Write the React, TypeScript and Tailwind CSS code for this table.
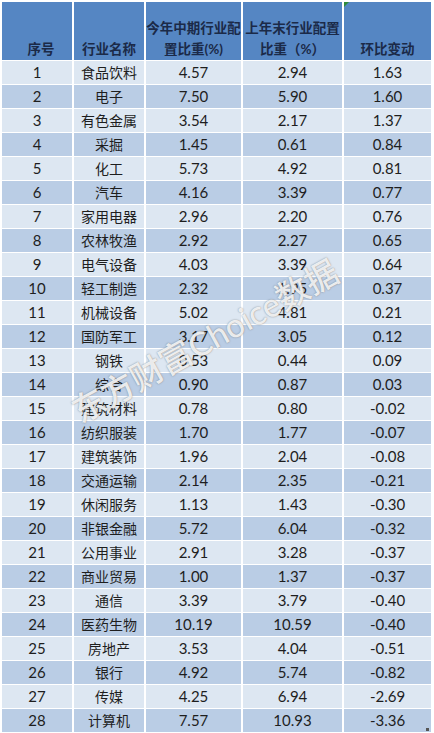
const rows: [number, string, string, string, string][] = [
  [1, '食品饮料', '4.57', '2.94', '1.63'],
  [2, '电子', '7.50', '5.90', '1.60'],
  [3, '有色金属', '3.54', '2.17', '1.37'],
  [4, '采掘', '1.45', '0.61', '0.84'],
  [5, '化工', '5.73', '4.92', '0.81'],
  [6, '汽车', '4.16', '3.39', '0.77'],
  [7, '家用电器', '2.96', '2.20', '0.76'],
  [8, '农林牧渔', '2.92', '2.27', '0.65'],
  [9, '电气设备', '4.03', '3.39', '0.64'],
  [10, '轻工制造', '2.32', '1.95', '0.37'],
  [11, '机械设备', '5.02', '4.81', '0.21'],
  [12, '国防军工', '3.17', '3.05', '0.12'],
  [13, '钢铁', '0.53', '0.44', '0.09'],
  [14, '综合', '0.90', '0.87', '0.03'],
  [15, '建筑材料', '0.78', '0.80', '-0.02'],
  [16, '纺织服装', '1.70', '1.77', '-0.07'],
  [17, '建筑装饰', '1.96', '2.04', '-0.08'],
  [18, '交通运输', '2.14', '2.35', '-0.21'],
  [19, '休闲服务', '1.13', '1.43', '-0.30'],
  [20, '非银金融', '5.72', '6.04', '-0.32'],
  [21, '公用事业', '2.91', '3.28', '-0.37'],
  [22, '商业贸易', '1.00', '1.37', '-0.37'],
  [23, '通信', '3.39', '3.79', '-0.40'],
  [24, '医药生物', '10.19', '10.59', '-0.40'],
  [25, '房地产', '3.53', '4.04', '-0.51'],
  [26, '银行', '4.92', '5.74', '-0.82'],
  [27, '传媒', '4.25', '6.94', '-2.69'],
  [28, '计算机', '7.57', '10.93', '-3.36'],
];

const cols = 'grid grid-cols-[70px_70px_95px_99px_87px] gap-x-[2px]';

export default function App() {
  return (
    <div className="relative w-[434px] h-[733px] overflow-hidden bg-white font-['Lato','Noto_Sans_CJK_SC',sans-serif]">
      <div className="flex w-[430px] flex-col gap-y-[1px] pt-[2px] pl-[2px]">
        {/* 表头 */}
        <div className={`${cols} h-[58px] text-[13.5px] font-bold leading-[21px] text-[#1b2a48]`}>
          <div className="flex items-end justify-center bg-[#5586c3] pl-[8px]">序号</div>
          <div className="flex items-end justify-center bg-[#5586c3]">行业名称</div>
          <div className="flex items-end justify-center bg-[#5586c3] text-center">
            今年中期行业配
            <br />
            置比重(%)
          </div>
          <div className="flex items-end justify-center bg-[#5586c3] text-center">
            上年末行业配置
            <br />
            比重（%）
          </div>
          <div className="relative flex items-end justify-center bg-[#5586c3]">
            <span className="absolute left-0 top-0 h-0 w-0 border-r-[5px] border-t-[5px] border-r-transparent border-t-[#2f8a3a]" />
            环比变动
          </div>
        </div>

        {rows.map(([n, name, a, b, c]) => (
          <div
            key={n}
            className={`${cols} h-[23px] text-[15px] leading-[23px] text-[#1e1e1e] ${
              n % 2 === 1 ? '[&>div]:bg-[#dde7f2]' : '[&>div]:bg-[#bacde5]'
            }`}
          >
            <div className="text-center">{n}</div>
            <div className="text-center text-[14px]">{name}</div>
            <div className="text-center">{a}</div>
            <div className="text-center">{b}</div>
            <div className="text-center">{c}</div>
          </div>
        ))}
      </div>

      {/* 水印 */}
      <div className="pointer-events-none absolute left-[205px] top-[341px] -translate-x-1/2 -translate-y-1/2 -rotate-[29deg] whitespace-nowrap text-[33px] font-medium text-white/85 [text-shadow:0_0_1.5px_rgba(80,80,80,0.75)]">
        东方财富Choice数据
      </div>

      <div className="absolute bottom-[2px] right-[5px] h-[3px] w-[3px] bg-[#555]" />
    </div>
  );
}
